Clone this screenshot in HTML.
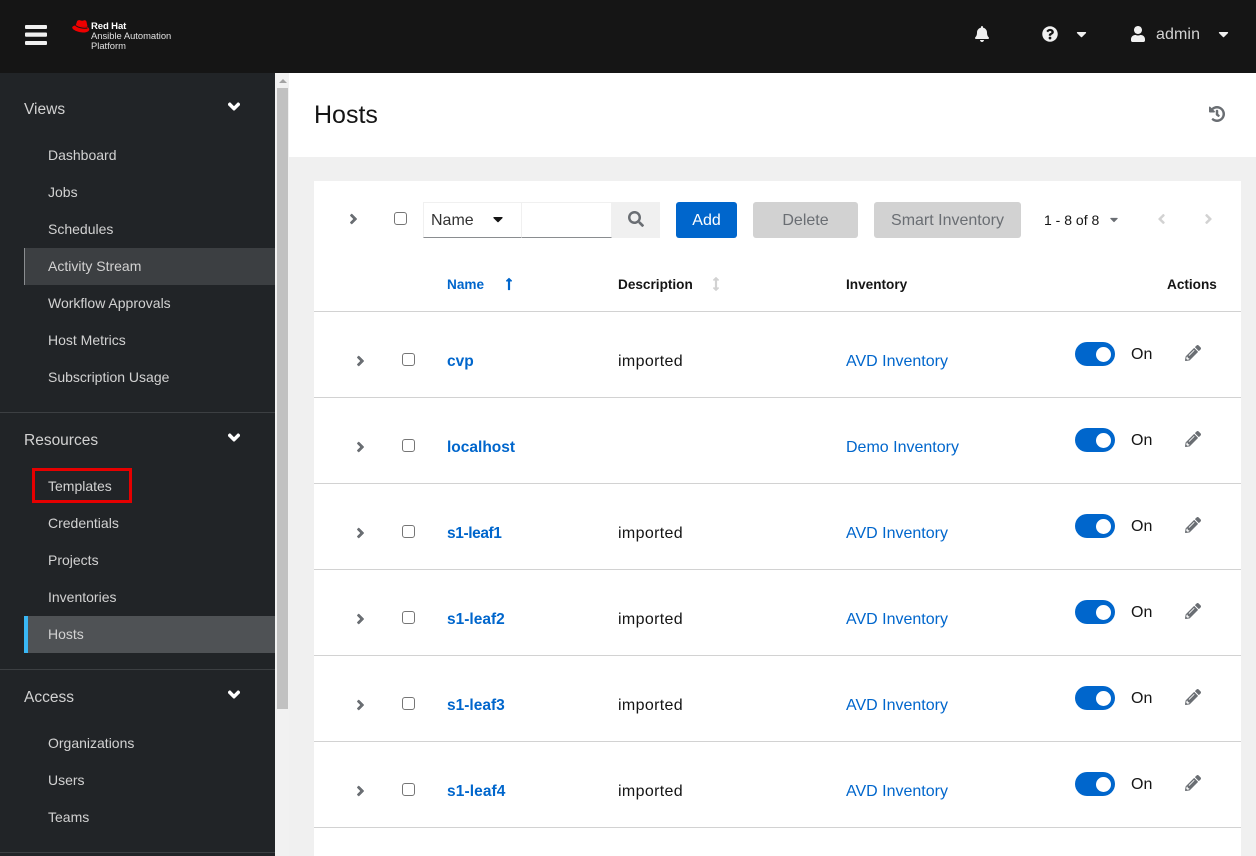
<!DOCTYPE html>
<html><head><meta charset="utf-8"><style>
html,body{margin:0;padding:0;width:1256px;height:856px;overflow:hidden;background:#f0f0f0;font-family:"Liberation Sans",sans-serif;color:#151515}
.a{position:absolute;white-space:nowrap}
svg{position:absolute;display:block}
.n{position:absolute;left:48px;color:#d2d2d2;font-size:14px;line-height:20px;white-space:nowrap}
.g{position:absolute;left:24px;color:#d2d2d2;font-size:15.5px;line-height:22px;margin-top:1px}
.s{position:absolute;left:0;width:275px;height:1px;background:#3c3f42}
.l{color:#06c}
.b{position:absolute;left:314px;width:927px;height:1px;background:#d2d2d2}
.cb{position:absolute;width:11px;height:11px;border:1px solid #767676;border-radius:3px;background:#fff}
.t{position:absolute;left:1075px;width:40px;height:24px;border-radius:12px;background:#06c}
.t i{position:absolute;left:21px;top:5px;width:15px;height:15px;border-radius:8px;background:#fff}
.c{font-size:16px;line-height:22px;margin-top:1px}
.m{font-weight:bold;font-size:15.5px}
.ls{letter-spacing:-.4px}
.i{letter-spacing:.35px}
.h{font-size:13.6px;line-height:20px;font-weight:bold;margin-top:1px}
.f{fill:#6a6e73}
.st{stroke:#6a6e73;stroke-width:16}
</style></head><body>
<svg width="0" height="0" style="position:absolute"><defs>
<path id="ar" d="M224.3 273l-136 136c-9.4 9.4-24.6 9.4-33.9 0l-22.6-22.6c-9.4-9.4-9.4-24.6 0-33.9l96.4-96.4-96.4-96.4c-9.4-9.4-9.4-24.6 0-33.9L54.3 103c9.4-9.4 24.6-9.4 33.9 0l136 136c9.5 9.4 9.5 24.6.1 34z"/>
<path id="ad" d="M143 352.3L7 216.3c-9.4-9.4-9.4-24.6 0-33.9l22.6-22.6c9.4-9.4 24.6-9.4 33.9 0l96.4 96.4 96.4-96.4c9.4-9.4 24.6-9.4 33.9 0l22.6 22.6c9.4 9.4 9.4 24.6 0 33.9l-136 136c-9.2 9.4-24.4 9.4-33.8 0z"/>
<path id="cd" d="M31.3 192h257.3c17.8 0 26.7 21.5 14.1 34.1L174.1 354.8c-7.8 7.8-20.5 7.8-28.3 0L17.2 226.1C4.6 213.5 13.5 192 31.3 192z"/>
<path id="pe" d="M497.9 142.1l-46.1 46.1c-4.7 4.7-12.3 4.7-17 0l-111-111c-4.7-4.7-4.7-12.3 0-17l46.1-46.1c18.7-18.7 49.1-18.7 67.9 0l60.1 60.1c18.8 18.7 18.8 49.1 0 67.9zM284.2 99.8L21.6 362.4.4 483.9c-2.9 16.4 11.4 30.6 27.8 27.8l121.5-21.3 262.6-262.6c4.7-4.7 4.7-12.3 0-17l-111-111c-4.8-4.7-12.4-4.7-17.1 0zM124.1 339.9c-5.5-5.5-5.5-14.3 0-19.8l154-154c5.5-5.5 14.3-5.5 19.8 0s5.5 14.3 0 19.8l-154 154c-5.5 5.5-14.3 5.5-19.8 0zM88 424h48v36.3l-64.5 11.3-31.1-31.1L51.7 376H88v48z"/>
</defs></svg>

<!-- header -->
<div class="a" style="left:0;top:0;width:1256px;height:73px;background:#151515"></div>
<svg style="left:25px;top:25px" width="22" height="20" viewBox="0 0 22 20" fill="#f0f0f0"><rect x="0" y="0" width="22" height="4" rx="1"/><rect x="0" y="7.500" width="22" height="4.200" rx="1"/><rect x="0" y="16" width="22" height="4" rx="1"/></svg>
<svg style="left:72px;top:20px" width="18" height="13" viewBox="0 0 18 13"><path fill="#e00" d="M3.500 6L5 1.500C5.400.4 6.500-.1 8 .2c1.500.4 2.500.7 3.500.3 1.500-.5 2.500-.2 3 1.200l1 4.800z"/><path fill="#e00" d="M3 5.500C1.200 6 .2 6.600.2 7.500c0 2.500 6.500 5 11.500 5 3 0 5.500-1.200 5.500-3 0-1.500-1.500-2.500-2.800-3z"/><path fill="none" stroke="#151515" stroke-width="1" d="M3.500 5.500C6 7.500 11 8.800 15.500 8"/></svg>
<div class="a" style="left:91px;top:21px;font-size:9.500px;line-height:12px;color:#fff;font-weight:bold;letter-spacing:-.1px">Red Hat</div>
<div class="a" style="left:91px;top:31px;font-size:9.400px;line-height:10px;color:#e0e0e0">Ansible Automation</div>
<div class="a" style="left:91px;top:41px;font-size:9.400px;line-height:10px;color:#e0e0e0">Platform</div>
<svg style="left:975px;top:26px" width="14" height="16" viewBox="0 0 448 512" fill="#f0f0f0"><path d="M224 512c35.32 0 63.97-28.65 63.97-64H160.03c0 35.35 28.65 64 63.97 64zm215.39-149.71c-19.32-20.76-55.47-51.99-55.47-154.29 0-77.7-54.48-139.9-127.94-155.16V32c0-17.67-14.32-32-31.98-32s-31.98 14.33-31.98 32v20.84C118.56 68.1 64.08 130.3 64.08 208c0 102.3-36.15 133.53-55.47 154.29-6 6.45-8.66 14.16-8.61 21.71.11 16.4 12.98 32 32.1 32h383.8c19.12 0 32-15.6 32.1-32 .05-7.55-2.61-15.27-8.61-21.71z"/></svg>
<svg style="left:1042px;top:26px" width="16" height="16" viewBox="0 0 512 512" fill="#f0f0f0"><path d="M504 256c0 136.997-111.043 248-248 248S8 392.997 8 256C8 119.083 119.043 8 256 8s248 111.083 248 248zM262.655 90c-54.497 0-89.255 22.957-116.549 63.758-3.536 5.286-2.353 12.415 2.715 16.258l34.699 26.31c5.205 3.947 12.621 3.008 16.665-2.122 17.864-22.658 30.113-35.797 57.303-35.797 20.429 0 45.698 13.148 45.698 32.958 0 14.976-12.363 22.667-32.534 33.976C247.128 238.528 216 254.941 216 296v4c0 6.627 5.373 12 12 12h56c6.627 0 12-5.373 12-12v-1.333c0-28.462 83.186-29.647 83.186-106.667 0-58.002-60.165-102-116.531-102zM256 338c-25.365 0-46 20.635-46 46 0 25.364 20.635 46 46 46s46-20.636 46-46c0-25.365-20.635-46-46-46z"/></svg>
<svg style="left:1076px;top:26px" width="11" height="16" viewBox="0 0 320 512" fill="#f0f0f0"><use href="#cd"/></svg>
<svg style="left:1131px;top:26px" width="14" height="16" viewBox="0 0 448 512" fill="#f0f0f0"><path d="M224 256c70.7 0 128-57.3 128-128S294.7 0 224 0 96 57.3 96 128s57.3 128 128 128zm89.6 32h-16.7c-22.2 10.2-46.9 16-72.9 16s-50.6-5.8-72.9-16h-16.7C60.2 288 0 348.2 0 422.4V464c0 26.5 21.5 48 48 48h352c26.5 0 48-21.5 48-48v-41.6c0-74.2-60.2-134.4-134.4-134.4z"/></svg>
<div class="a" style="left:1156px;top:25px;font-size:16px;line-height:20px;color:#d2d2d2;letter-spacing:.1px">admin</div>
<svg style="left:1218px;top:26px" width="11" height="16" viewBox="0 0 320 512" fill="#f0f0f0"><use href="#cd"/></svg>

<!-- sidebar -->
<div class="a" style="left:0;top:73px;width:275px;height:783px;background:#212427"></div>
<div class="a" style="left:275px;top:73px;width:14px;height:783px;background:#f1f1f1"></div>
<div class="a" style="left:277px;top:88px;width:11px;height:621px;background:#c1c1c1"></div>
<div class="a" style="left:279px;top:79px;width:0;height:0;border-left:4px solid transparent;border-right:4px solid transparent;border-bottom:4.500px solid #a3a3a3"></div>

<div class="a" style="left:24px;top:248px;width:251px;height:37px;background:#3c3f42;box-sizing:border-box;border-left:1px solid #8a8d90"></div>
<div class="a" style="left:24px;top:616px;width:251px;height:37px;background:#4f5255;box-sizing:border-box;border-left:4px solid #39b7f5"></div>
<div class="a" style="left:32px;top:468px;width:100px;height:35px;box-sizing:border-box;border:3px solid #e60000"></div>

<div class="g" style="top:98px">Views</div>
<div class="g" style="top:429px">Resources</div>
<div class="g" style="top:686px">Access</div>
<svg style="left:228px;top:97px" width="12" height="19" viewBox="0 0 320 512" fill="#fff" stroke="#fff" stroke-width="14"><use href="#ad"/></svg>
<svg style="left:228px;top:428px" width="12" height="19" viewBox="0 0 320 512" fill="#fff" stroke="#fff" stroke-width="14"><use href="#ad"/></svg>
<svg style="left:228px;top:685px" width="12" height="19" viewBox="0 0 320 512" fill="#fff" stroke="#fff" stroke-width="14"><use href="#ad"/></svg>
<div class="n" style="top:145px">Dashboard</div>
<div class="n" style="top:182px">Jobs</div>
<div class="n" style="top:219px">Schedules</div>
<div class="n" style="top:256px">Activity Stream</div>
<div class="n" style="top:293px">Workflow Approvals</div>
<div class="n" style="top:330px">Host Metrics</div>
<div class="n" style="top:367px">Subscription Usage</div>
<div class="s" style="top:412px"></div>
<div class="n" style="top:476px">Templates</div>
<div class="n" style="top:513px">Credentials</div>
<div class="n" style="top:550px">Projects</div>
<div class="n" style="top:587px">Inventories</div>
<div class="n" style="top:624px">Hosts</div>
<div class="s" style="top:669px"></div>
<div class="n" style="top:733px">Organizations</div>
<div class="n" style="top:770px">Users</div>
<div class="n" style="top:807px">Teams</div>
<div class="s" style="top:852px"></div>

<!-- title -->
<div class="a" style="left:289px;top:73px;width:967px;height:84px;background:#fff"></div>
<div class="a" style="left:314px;top:99px;font-size:25px;line-height:32px">Hosts</div>
<svg style="left:1209px;top:106px" width="16" height="16" viewBox="0 0 512 512" class="f st"><path d="M504 255.531c.253 136.64-111.18 248.372-247.82 248.468-59.015.042-113.223-20.53-155.822-54.911-11.077-8.94-11.905-25.541-1.839-35.607l11.267-11.267c8.609-8.609 22.353-9.551 31.891-1.984C173.062 425.135 212.781 440 256 440c101.705 0 184-82.311 184-184 0-101.705-82.311-184-184-184-48.814 0-93.149 18.969-126.068 49.932l50.754 50.754c10.08 10.08 2.941 27.314-11.313 27.314H24c-8.837 0-16-7.163-16-16V38.627c0-14.254 17.234-21.393 27.314-11.314l49.372 49.372C129.209 34.136 189.552 8 256 8c136.81 0 247.747 110.78 248 247.531zm-180.912 78.784l9.823-12.63c8.138-10.463 6.253-25.542-4.21-33.679L288 256.349V152c0-13.255-10.745-24-24-24h-16c-13.255 0-24 10.745-24 24v135.651l65.409 50.874c10.463 8.137 25.541 6.253 33.679-4.21z"/></svg>

<!-- card -->
<div class="a" style="left:314px;top:181px;width:927px;height:675px;background:#fff"></div>

<!-- toolbar -->
<svg style="left:349px;top:211px" width="9" height="16" viewBox="0 0 256 512" class="f st"><use href="#ar"/></svg>
<div class="cb" style="left:394px;top:212px"></div>
<div class="a" style="left:423px;top:202px;width:99px;height:36px;box-sizing:border-box;border:1px solid #f0f0f0;border-bottom:1px solid #8a8d90"></div>
<div class="a" style="left:521px;top:202px;width:91px;height:36px;box-sizing:border-box;border:1px solid #f0f0f0;border-bottom:1px solid #8a8d90"></div>
<div class="a" style="left:431px;top:210px;font-size:16px;line-height:22px;color:#333">Name</div>
<svg style="left:492px;top:211px" width="12" height="16" viewBox="0 0 320 512" fill="#151515"><use href="#cd"/></svg>
<div class="a" style="left:612px;top:202px;width:48px;height:36px;background:#f0f0f0"></div>
<svg style="left:628px;top:211px" width="16" height="16" viewBox="0 0 512 512" class="f"><path d="M505 442.7L405.3 343c-4.5-4.5-10.6-7-17-7H372c27.6-35.3 44-79.7 44-128C416 93.1 322.9 0 208 0S0 93.1 0 208s93.1 208 208 208c48.3 0 92.7-16.4 128-44v16.3c0 6.4 2.5 12.5 7 17l99.7 99.7c9.4 9.4 24.6 9.4 33.9 0l28.3-28.3c9.4-9.4 9.4-24.6.1-34zM208 336c-70.7 0-128-57.2-128-128 0-70.7 57.2-128 128-128 70.7 0 128 57.2 128 128 0 70.7-57.2 128-128 128z"/></svg>
<div class="a" style="left:676px;top:202px;width:61px;height:36px;background:#06c;border-radius:3px;color:#fff;font-size:16px;line-height:38px;text-align:center">Add</div>
<div class="a" style="left:753px;top:202px;width:105px;height:36px;background:#d2d2d2;border-radius:3px;color:#6a6e73;font-size:16px;line-height:38px;text-align:center">Delete</div>
<div class="a" style="left:874px;top:202px;width:147px;height:36px;background:#d2d2d2;border-radius:3px;color:#6a6e73;font-size:16px;line-height:38px;text-align:center">Smart Inventory</div>
<div class="a" style="left:1044px;top:210px;font-size:14px;line-height:20px">1 - 8 of 8</div>
<svg style="left:1110px;top:213px" width="8" height="13" viewBox="0 0 320 512" class="f"><use href="#cd"/></svg>
<svg style="left:1157px;top:211px" width="9" height="16" viewBox="0 0 256 512" fill="#d2d2d2"><path d="M31.7 239l136-136c9.4-9.4 24.6-9.4 33.9 0l22.6 22.6c9.4 9.4 9.4 24.6 0 33.9L127.9 256l96.4 96.4c9.4 9.4 9.4 24.6 0 33.9L201.7 409c-9.4 9.4-24.6 9.4-33.9 0l-136-136c-9.5-9.4-9.5-24.6-.1-34z"/></svg>
<svg style="left:1204px;top:211px" width="9" height="16" viewBox="0 0 256 512" fill="#d2d2d2"><use href="#ar"/></svg>

<!-- table head -->
<div class="a l h" style="left:447px;top:274px">Name</div>
<svg style="left:504px;top:277px" width="10" height="14" viewBox="0 0 256 512" fill="#06c"><path d="M88 166.059V468c0 6.627 5.373 12 12 12h56c6.627 0 12-5.373 12-12V166.059h46.059c21.382 0 32.09-25.851 16.971-40.971l-86.059-86.059c-9.373-9.373-24.569-9.373-33.941 0l-86.059 86.059c-15.119 15.119-4.411 40.971 16.971 40.971H88z"/></svg>
<div class="a h" style="left:618px;top:274px">Description</div>
<svg style="left:711px;top:277px" width="10" height="14" viewBox="0 0 256 512" fill="#d2d2d2"><path d="M214.059 377.941H168V134.059h46.059c21.382 0 32.09-25.851 16.971-40.971L144.971 7.029c-9.373-9.373-24.569-9.373-33.941 0L24.971 93.088c-15.119 15.119-4.411 40.971 16.971 40.971H88v243.882H41.941c-21.382 0-32.09 25.851-16.971 40.971l86.059 86.059c9.373 9.373 24.569 9.373 33.941 0l86.059-86.059c15.12-15.119 4.412-40.971-16.97-40.971z"/></svg>
<div class="a h" style="left:846px;top:274px">Inventory</div>
<div class="a h" style="left:1167px;top:274px">Actions</div>
<div class="b" style="top:311px"></div>

<!-- row 1 -->
<svg style="left:356px;top:353px" width="9" height="16" viewBox="0 0 256 512" class="f st"><use href="#ar"/></svg>
<div class="cb" style="left:402px;top:353px"></div>
<div class="a c l m" style="left:447px;top:350px">cvp</div>
<div class="a c i" style="left:618px;top:350px">imported</div>
<div class="a c l" style="left:846px;top:350px">AVD Inventory</div>
<div class="t" style="top:342px"><i></i></div>
<div class="a c" style="left:1131px;top:343px">On</div>
<svg style="left:1185px;top:345px" width="16" height="16" viewBox="0 0 512 512" class="f"><use href="#pe"/></svg>
<div class="b" style="top:397px"></div>

<!-- row 2 -->
<svg style="left:356px;top:439px" width="9" height="16" viewBox="0 0 256 512" class="f st"><use href="#ar"/></svg>
<div class="cb" style="left:402px;top:439px"></div>
<div class="a c l m" style="left:447px;top:436px">localhost</div>
<div class="a c l" style="left:846px;top:436px">Demo Inventory</div>
<div class="t" style="top:428px"><i></i></div>
<div class="a c" style="left:1131px;top:429px">On</div>
<svg style="left:1185px;top:431px" width="16" height="16" viewBox="0 0 512 512" class="f"><use href="#pe"/></svg>
<div class="b" style="top:483px"></div>

<!-- row 3 -->
<svg style="left:356px;top:525px" width="9" height="16" viewBox="0 0 256 512" class="f st"><use href="#ar"/></svg>
<div class="cb" style="left:402px;top:525px"></div>
<div class="a c l m ls" style="left:447px;top:522px">s1-leaf1</div>
<div class="a c i" style="left:618px;top:522px">imported</div>
<div class="a c l" style="left:846px;top:522px">AVD Inventory</div>
<div class="t" style="top:514px"><i></i></div>
<div class="a c" style="left:1131px;top:515px">On</div>
<svg style="left:1185px;top:517px" width="16" height="16" viewBox="0 0 512 512" class="f"><use href="#pe"/></svg>
<div class="b" style="top:569px"></div>

<!-- row 4 -->
<svg style="left:356px;top:611px" width="9" height="16" viewBox="0 0 256 512" class="f st"><use href="#ar"/></svg>
<div class="cb" style="left:402px;top:611px"></div>
<div class="a c l m" style="left:447px;top:608px;letter-spacing:0">s1-leaf2</div>
<div class="a c i" style="left:618px;top:608px">imported</div>
<div class="a c l" style="left:846px;top:608px">AVD Inventory</div>
<div class="t" style="top:600px"><i></i></div>
<div class="a c" style="left:1131px;top:601px">On</div>
<svg style="left:1185px;top:603px" width="16" height="16" viewBox="0 0 512 512" class="f"><use href="#pe"/></svg>
<div class="b" style="top:655px"></div>

<!-- row 5 -->
<svg style="left:356px;top:697px" width="9" height="16" viewBox="0 0 256 512" class="f st"><use href="#ar"/></svg>
<div class="cb" style="left:402px;top:697px"></div>
<div class="a c l m" style="left:447px;top:694px;letter-spacing:0">s1-leaf3</div>
<div class="a c i" style="left:618px;top:694px">imported</div>
<div class="a c l" style="left:846px;top:694px">AVD Inventory</div>
<div class="t" style="top:686px"><i></i></div>
<div class="a c" style="left:1131px;top:687px">On</div>
<svg style="left:1185px;top:689px" width="16" height="16" viewBox="0 0 512 512" class="f"><use href="#pe"/></svg>
<div class="b" style="top:741px"></div>

<!-- row 6 -->
<svg style="left:356px;top:783px" width="9" height="16" viewBox="0 0 256 512" class="f st"><use href="#ar"/></svg>
<div class="cb" style="left:402px;top:783px"></div>
<div class="a c l m" style="left:447px;top:780px;letter-spacing:.1px">s1-leaf4</div>
<div class="a c i" style="left:618px;top:780px">imported</div>
<div class="a c l" style="left:846px;top:780px">AVD Inventory</div>
<div class="t" style="top:772px"><i></i></div>
<div class="a c" style="left:1131px;top:773px">On</div>
<svg style="left:1185px;top:775px" width="16" height="16" viewBox="0 0 512 512" class="f"><use href="#pe"/></svg>
<div class="b" style="top:827px"></div>
</body></html>
